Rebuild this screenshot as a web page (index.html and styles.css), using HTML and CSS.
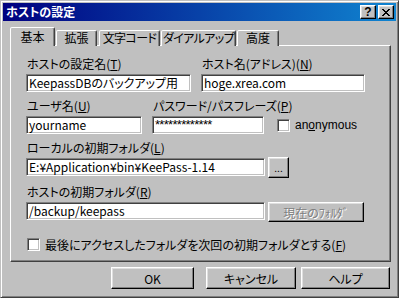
FILE: index.html
```html
<!DOCTYPE html>
<html lang="ja">
<head>
<meta charset="utf-8">
<title>ホストの設定</title>
<link rel="stylesheet" href="styles.css">
</head>
<body>
<div class="window">
  <div class="titlebar">
    <span class="title">ホストの設定</span>
    <div class="tbtns">
      <span class="tbtn help">?</span>
      <span class="tbtn">
        <svg width="8" height="7" viewBox="0 0 8 7"><path d="M0 0h2v1h-2zM6 0h2v1h-2zM1 1h2v1h-2zM5 1h2v1h-2zM2 2h4v1h-4zM3 3h2v1h-2zM2 4h4v1h-4zM1 5h2v1h-2zM5 5h2v1h-2zM0 6h2v1h-2zM6 6h2v1h-2z" fill="#000"/></svg>
      </span>
    </div>
  </div>
  <div class="client">
    <div class="tabs">
      <div class="tab active t-kihon">基本</div>
      <div class="tab t-kakucho">拡張</div>
      <div class="tab t-moji">文字コード</div>
      <div class="tab t-dial">ダイアルアップ</div>
      <div class="tab t-kodo">高度</div>
    </div>
    <div class="panel">
      <div class="row">
        <div class="field f-name">
          <div class="label">ホストの設定名(<u>T</u>)</div>
          <div class="edit">KeepassDBのバックアップ用</div>
        </div>
        <div class="field f-host">
          <div class="label">ホスト名(アドレス)(<u>N</u>)</div>
          <div class="edit">hoge.xrea.com</div>
        </div>
      </div>
      <div class="row">
        <div class="field f-user">
          <div class="label">ユーザ名(<u>U</u>)</div>
          <div class="edit">yourname</div>
        </div>
        <div class="field f-pass">
          <div class="label">パスワード/パスフレーズ(<u>P</u>)</div>
          <div class="edit pw">*************</div>
        </div>
        <div class="check anon"><span class="box"></span><span>an<u>o</u>nymous</span></div>
      </div>
      <div class="row col">
        <div class="label">ローカルの初期フォルダ(<u>L</u>)</div>
        <div class="line">
          <div class="edit wide">E:¥Application¥bin¥KeePass-1.14</div>
          <div class="btn small">...</div>
        </div>
      </div>
      <div class="row col">
        <div class="label">ホストの初期フォルダ(<u>R</u>)</div>
        <div class="line">
          <div class="edit wide">/backup/keepass</div>
          <div class="btn current disabled">現在のﾌｫﾙﾀﾞ</div>
        </div>
      </div>
      <div class="check last"><span class="box"></span><span>最後にアクセスしたフォルダを次回の初期フォルダとする(<u>F</u>)</span></div>
    </div>
    <div class="actions">
      <div class="btn b-ok">OK</div>
      <div class="btn b-cancel">キャンセル</div>
      <div class="btn b-help">ヘルプ</div>
    </div>
  </div>
</div>
</body>
</html>
```
FILE: styles.css
```css
* { box-sizing: border-box; }
html, body { margin: 0; padding: 0; background: #c0c0c0; }
body {
  font-family: "Noto Sans CJK JP", "Noto Sans", sans-serif;
  font-size: 12px;
  font-feature-settings: "palt";
  color: #000;
}
.window {
  width: 399px;
  height: 298px;
  background: #c0c0c0;
  border: 1px solid;
  border-color: #c0c0c0 #404040 #404040 #c0c0c0;
  box-shadow: inset 1px 1px #fff, inset -1px -1px #808080;
  padding: 2px;
  display: flex;
  flex-direction: column;
}
.titlebar {
  height: 18px;
  background: linear-gradient(to right, #000080, #1084d0);
  display: flex;
  align-items: center;
  justify-content: space-between;
  padding: 0 2px 0 3px;
}
.title {
  color: #fff;
  font-weight: bold;
  line-height: 14px;
}
.tbtns { display: flex; gap: 2px; }
.tbtn {
  width: 16px;
  height: 14px;
  background: #c0c0c0;
  border: 1px solid;
  border-color: #fff #000 #000 #fff;
  box-shadow: inset -1px -1px #808080, inset 1px 1px #dfdfdf;
  display: flex;
  align-items: center;
  justify-content: center;
}
.tbtn.help {
  font-family: "Liberation Sans", sans-serif;
  font-weight: bold;
  font-size: 12px;
  line-height: 12px;
}
.client {
  flex: 1;
  display: flex;
  flex-direction: column;
  padding: 7px 5px 0 7px;
}
.tabs {
  display: flex;
  align-items: flex-end;
  height: 18px;
  position: relative;
  z-index: 1;
  margin-bottom: -1px;
}
.tab {
  height: 16px;
  line-height: 14px;
  text-align: center;
  white-space: nowrap;
  border: 1px solid;
  border-bottom: none;
  border-color: #fff #404040 transparent #fff;
  border-radius: 2px 2px 0 0;
  box-shadow: inset -1px 0 #808080;
  background: #c0c0c0;
  margin-right: 1px;
}
.tab.active { height: 19px; line-height: 16px; padding-top: 1px; }
.t-kihon { width: 45px; }
.t-kakucho { width: 41px; }
.t-moji { width: 61px; margin-left: 1px; letter-spacing: -0.6px; }
.t-dial { width: 75px; letter-spacing: -0.6px; }
.t-kodo { width: 42px; }
.panel {
  width: 381px;
  height: 217px;
  border: 1px solid;
  border-color: #fff #404040 #404040 #fff;
  box-shadow: inset -1px -1px #808080;
  padding: 12px 0 0 15px;
  display: flex;
  flex-direction: column;
  gap: 8px;
}
.row { display: flex; align-items: flex-end; gap: 10px; }
.row.col { flex-direction: column; align-items: flex-start; gap: 0; }
.label { line-height: 12px; margin-bottom: 4px; padding-left: 1px; white-space: nowrap; }
.edit {
  height: 18px;
  background: #fff;
  border: 1px solid;
  border-color: #808080 #fff #fff #808080;
  box-shadow: inset 1px 1px #404040, inset -1px -1px #c0c0c0;
  padding: 0 2px;
  line-height: 16px;
  white-space: nowrap;
  overflow: hidden;
}
.f-name { width: 165px; }
.f-host { width: 164px; }
.f-user { width: 116px; }
.f-pass { width: 112px; }
.pw { font-family: "Liberation Sans", sans-serif; font-size: 13px; letter-spacing: -0.7px; }
.check { display: flex; align-items: center; gap: 5px; }
.box {
  width: 13px;
  height: 13px;
  background: #fff;
  border: 1px solid;
  border-color: #808080 #fff #fff #808080;
  box-shadow: inset 1px 1px #404040, inset -1px -1px #c0c0c0;
}
.anon { margin-left: 3px; height: 18px; font-family: "Liberation Sans", sans-serif; }
.line { display: flex; align-items: flex-start; gap: 3px; }
.edit.wide { width: 239px; }
.btn {
  background: #c0c0c0;
  border: 1px solid;
  border-color: #fff #000 #000 #fff;
  box-shadow: inset -1px -1px #808080, inset 1px 1px #dfdfdf;
  display: flex;
  align-items: center;
  justify-content: center;
  white-space: nowrap;
}
.btn.small { width: 21px; height: 21px; margin-top: -1px; line-height: 10px; font-size: 10px; }
.btn.current { width: 96px; height: 20px; }
.btn.disabled { color: #808080; text-shadow: 1px 1px #fff; }
.last { margin-top: 6px; margin-left: 1px; }
.actions {
  display: flex;
  justify-content: flex-end;
  margin-top: 5px;
  padding-right: 1px;
}
.actions .btn { height: 22px; }
.b-ok { width: 83px; }
.b-cancel { width: 90px; margin-left: 12px; }
.b-help { width: 89px; margin-left: 5px; }
```
